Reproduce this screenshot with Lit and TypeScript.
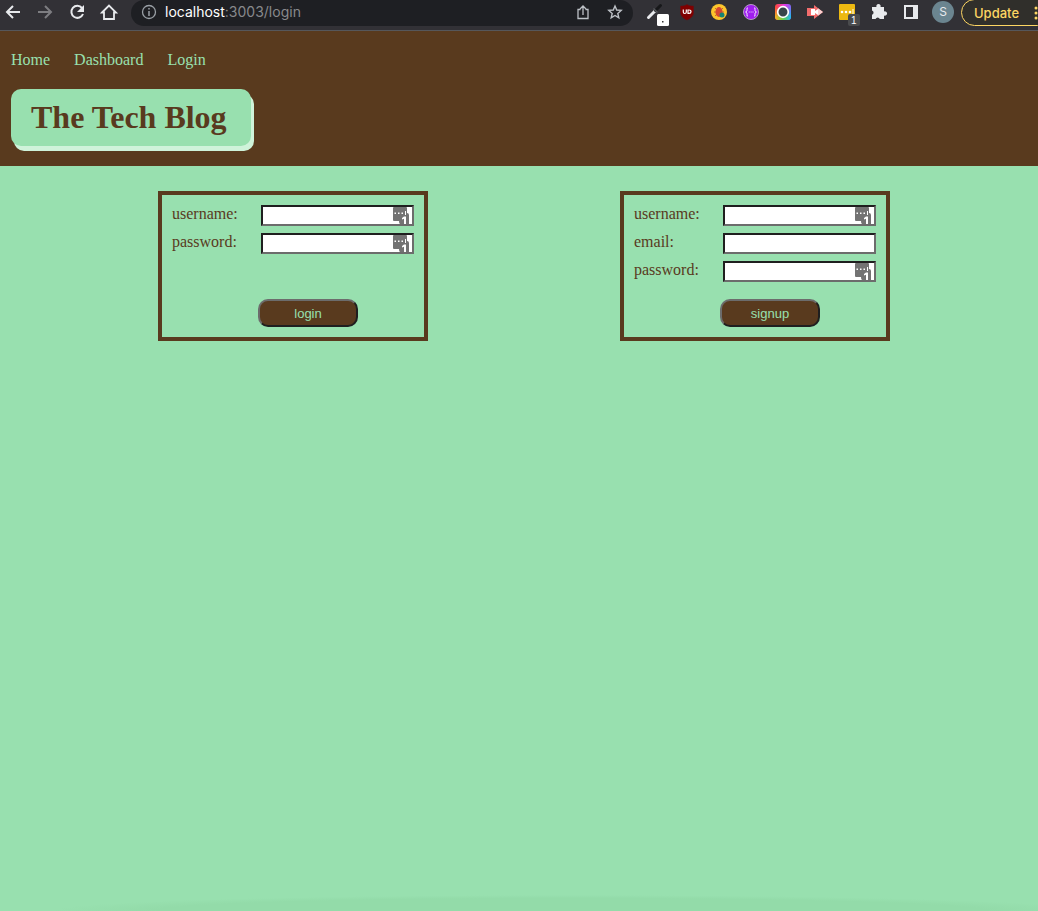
import { LitElement, html, svg, css, nothing } from "lit";
import { customElement, property } from "lit/decorators.js";

interface Field {
  name: string;
  type: string;
  filler: boolean;
}

@customElement("browser-bar")
export class BrowserBar extends LitElement {
  static styles = css`
    :host {
      display: block;
      color: #e8eaed;
      font-family: Inter, "Liberation Sans", sans-serif;
      background: #323136;
      border-bottom: 1px solid #56575b;
    }
    .bar {
      display: flex;
      align-items: flex-start;
      height: 30px;
      overflow: hidden;
    }
    button {
      display: block;
      flex: none;
      margin: 0;
      padding: 0;
      border: 0;
      color: inherit;
      background: none;
      font-family: inherit;
    }
    svg {
      display: block;
    }
    .tools {
      display: flex;
      gap: 8px;
      padding-left: 1px;
    }
    .dim {
      color: #7d7d81;
    }
    .address {
      display: flex;
      flex: 1;
      min-width: 0;
      height: 26px;
      margin-left: 10px;
      padding: 0 6px;
      background: #1e1f23;
      border-radius: 13px;
    }
    .info {
      color: #9aa0a6;
    }
    .url {
      flex: 1;
      margin-left: 4px;
      color: #88898c;
      font-size: 14px;
      line-height: 24px;
      white-space: nowrap;
    }
    .host {
      color: #ffffff;
    }
    .actions {
      display: flex;
      gap: 8px;
      color: #bdc1c6;
    }
    .extensions {
      display: flex;
      gap: 8px;
      margin-left: 10px;
    }
    .avatar {
      width: 22px;
      height: 22px;
      margin: 1px 0 0 9px;
      border-radius: 50%;
      background: #6b8590;
      font-size: 12px;
      line-height: 22px;
      text-align: center;
    }
    .update {
      display: flex;
      align-items: center;
      justify-content: space-between;
      box-sizing: border-box;
      width: 90px;
      height: 27px;
      margin: -1px -13px 0 7px;
      padding: 0 12px;
      color: #fdd663;
      background: #302f2b;
      border: 1px solid #fdd663;
      border-radius: 14px;
      font-size: 13px;
      font-weight: 500;
    }
  `;

  private icon(shape: unknown) {
    return html`<svg width="24" height="27" viewBox="0 0 24 27" fill="none" stroke="currentColor" stroke-width="2" aria-hidden="true">${shape}</svg>`;
  }

  private extensions() {
    return [
      ["Color picker", svg`<path d="M5.500 17.500 12 11" stroke="#e8eaed" stroke-width="3" stroke-linecap="round"/><path d="M12.500 10.500 17.500 5.500" stroke="#17181a" stroke-width="3" stroke-linecap="round"/><path d="M10.500 8.500l4 4" stroke="#55575b" stroke-width="1.500"/><rect x="14" y="14" width="12" height="12" rx="1.500" fill="#fff" stroke="none"/><rect x="19" y="21" width="1.500" height="1.500" fill="#333" stroke="none"/>`],
      ["Blocker", svg`<path d="M12 4.500c2 1.500 4 1.500 6.500 1.500v6.500c0 3.500-3 6-6.500 7.500-3.500-1.500-6.500-4-6.500-7.500V6c2.500 0 4.500 0 6.500-1.500z" fill="#800000" stroke="#6b0c12" stroke-width=".5"/><path d="M8.300 9.500v2.500q0 1.500 1.500 1.500t1.500-1.500v-2.500M13 10h1q2 0 2 1.700t-2 1.700H13z" stroke="#fff" stroke-width="1.200"/>`],
      ["Bug finder", svg`<circle cx="12" cy="12" r="8" fill="#fcc52c" stroke="none"/><path d="M8 8l2 2m6-2-2 2M7 12h3m4 0h3M8 16l2-2" stroke="#c36a2d" stroke-width="1"/><ellipse cx="12" cy="12" rx="3.500" ry="5" fill="#d54732" stroke="none"/><circle cx="15" cy="15" r="2.500" fill="#168474" stroke="none"/>`],
      ["Code viewer", svg`<circle cx="12" cy="12" r="7.500" fill="#a01df0" stroke="#b69bc7" stroke-width="1"/><path d="M9 8H8v3l-1.500 1L8 13v3h1M15 8h1v3l1.500 1-1.500 1v3h-1M9.700 12h1M11.600 12h1M13.500 12h1" stroke="#ead8fa" stroke-width="1"/>`],
      ["Color ring", svg`<defs><linearGradient id="upper" x1="0" x2="1"><stop stop-color="#ff4a30"/><stop offset=".6" stop-color="#e438e8"/><stop offset="1" stop-color="#7a6af6"/></linearGradient><linearGradient id="lower" x1="0" x2="1"><stop stop-color="#ffb020"/><stop offset=".5" stop-color="#62d04a"/><stop offset="1" stop-color="#20b8f6"/></linearGradient><linearGradient id="fade" x1="0" x2="0" y1="0" y2="1"><stop offset=".2" stop-color="#000"/><stop offset=".8" stop-color="#fff"/></linearGradient><mask id="low"><rect x="4" y="4" width="16" height="16" fill="url(#fade)" stroke="none"/></mask></defs><rect x="4" y="4" width="16" height="16" rx="3" fill="url(#upper)" stroke="none"/><rect x="4" y="4" width="16" height="16" rx="3" fill="url(#lower)" stroke="none" mask="url(#low)"/><circle cx="12" cy="12" r="5.300" fill="#38444b" stroke="#fff" stroke-width="1.700"/>`],
      ["Recorder", svg`<path d="M4 8h7V5l9 7-9 7v-3H4z" fill="#f26c6c" stroke="none"/><path d="M8 9h4v2l3-2v6l-3-2v2H8z" fill="#fff" stroke="none"/><path d="M15 8.300 20 12l-5 3.700z" fill="#fbd3d3" stroke="none"/>`],
      ["Password manager, 1 item", svg`<rect x="4" y="4" width="16" height="16" rx="1" fill="#edb911" stroke="none"/><g fill="#fff" stroke="none"><circle cx="7" cy="12" r="1.300"/><circle cx="11" cy="12" r="1.300"/><circle cx="15" cy="12" r="1.300"/><path d="M17.500 9h1v5h-1z"/></g><rect x="13" y="14" width="12" height="12" rx="2" fill="#4a4b4d" stroke="none"/><text x="16" y="24" fill="#fff" stroke="none" font-family="Liberation Sans, sans-serif" font-size="10">1</text>`],
      ["Extensions", svg`<path d="M5 7h4.500a2.200 2.200 0 1 1 4 0H17v4.500a2.200 2.200 0 1 1 0 4V19h-4.200a2.200 2.200 0 0 0-4.200 0H5v-4.200a2.200 2.200 0 0 0 0-4.200z" fill="currentColor" stroke="none"/>`],
      ["Side panel", svg`<path d="M5 5h14v14H5zM7 7v10h7V7z" fill="currentColor" fill-rule="evenodd" stroke="none"/>`],
    ] as const;
  }

  render() {
    return html`
      <div class="bar">
        <div class="tools">
          <button aria-label="Back">${this.icon(svg`<path d="M19 12H6m6-6-6 6 6 6"/>`)}</button>
          <button class="dim" aria-label="Forward">${this.icon(svg`<path d="M5 12h13m-6-6 6 6-6 6"/>`)}</button>
          <button aria-label="Reload">${this.icon(svg`<path d="M17 8a6 6 0 1 0 1 6"/><path d="M19 5v7h-7z" fill="currentColor" stroke="none"/>`)}</button>
          <button aria-label="Home page">${this.icon(svg`<path d="M5 12.500l7-7 7 7h-2V19H7v-6.500z" stroke-width="1.800"/>`)}</button>
        </div>
        <div class="address">
          <button class="info" aria-label="Site information">${this.icon(svg`<circle cx="12" cy="12" r="6.500" stroke-width="1.300"/><path d="M12 11v5M12 8v1.500" stroke-width="1.500"/>`)}</button>
          <div class="url"><span class="host">localhost</span>:3003/login</div>
          <div class="actions">
            <button aria-label="Share">${this.icon(svg`<path d="M9.500 9.500H7V18.500h10V9.500h-2.500M12 15V6m-3 3 3-3 3 3" stroke-width="1.300"/>`)}</button>
            <button aria-label="Bookmark">${this.icon(svg`<path d="m12 6 1.700 4 4.500.4-3.400 3 1 4.400-3.800-2.300-3.800 2.300 1-4.400-3.400-3 4.500-.4z" stroke-width="1.400"/>`)}</button>
          </div>
        </div>
        <div class="extensions">
          ${this.extensions().map(([name, shape]) => html`<button aria-label=${name}><svg width="24" height="27" viewBox="0 0 24 27" overflow="visible" fill="none" stroke="currentColor" stroke-width="2" aria-hidden="true">${shape}</svg></button>`)}
        </div>
        <button class="avatar" aria-label="Profile S">S</button>
        <button class="update">Update
          <svg width="4" height="14" viewBox="0 0 4 14" fill="currentColor" aria-hidden="true"><circle cx="2" cy="2" r="1.500"/><circle cx="2" cy="7" r="1.500"/><circle cx="2" cy="12" r="1.500"/></svg>
        </button>
      </div>
    `;
  }
}

@customElement("account-form")
export class AccountForm extends LitElement {
  @property() action = "";
  @property({ attribute: false }) fields: Field[] = [];

  static styles = css`
    :host {
      display: block;
    }
    form {
      display: flex;
      flex-direction: column;
      box-sizing: border-box;
      width: 270px;
      min-height: 150px;
      padding: 10px;
      border: 4px solid #593a1e;
      color: #593a1e;
      font-size: 16px;
      line-height: 18px;
    }
    .row {
      display: flex;
      align-items: flex-start;
      justify-content: space-between;
      margin-bottom: 7px;
    }
    .entry {
      display: grid;
    }
    input,
    .filler {
      grid-area: 1 / 1;
    }
    input {
      box-sizing: border-box;
      width: 153px;
      height: 21px;
      margin: 0;
      padding: 1px 2px;
      border: 2px solid;
      border-color: #1f1f1f #6c6c6c #6c6c6c #1f1f1f;
      border-radius: 0;
      background: #ffffff;
      font: 13px "Liberation Sans", sans-serif;
    }
    .filler {
      justify-self: end;
      align-self: center;
      margin-right: 5px;
      pointer-events: none;
    }
    button {
      width: 100px;
      height: 28px;
      margin: auto 0 0 86px;
      padding: 0;
      color: #98e0af;
      background: #593a1e;
      border: 2px solid;
      border-color: #6c6c6c #1f1f1f #1f1f1f #6c6c6c;
      border-radius: 10px;
      font: 13px "Liberation Sans", sans-serif;
    }
  `;

  render() {
    return html`
      <form @submit=${(e: Event) => e.preventDefault()}>
        ${this.fields.map(
          (f) => html`
            <div class="row">
              <label for=${f.name}>${f.name}:</label>
              <div class="entry">
                <input id=${f.name} name=${f.name} type=${f.type} />
                ${f.filler
                  ? html`<svg class="filler" width="16" height="17" viewBox="0 0 16 17" aria-hidden="true">
                      <path d="M1 0h12q1 0 1 1v5q2 0 2 2v9H7q-1 0-1-3H1q-1 0-1-1V1q0-1 1-1z" fill="#737373" />
                      <path d="M1.500 5.500H3V7H1.500zM5 5.500h1.500V7H5zM8.500 5.500H10V7H8.500zM12 4h1v4h-1z" fill="#fff" />
                      <path d="M9 11l2-1.500h2V17h-2v-5.300L9 12.500z" fill="#fff" />
                    </svg>`
                  : nothing}
              </div>
            </div>
          `,
        )}
        <button type="submit">${this.action}</button>
      </form>
    `;
  }
}

@customElement("app-root")
export class AppRoot extends LitElement {
  static styles = css`
    :host {
      display: flex;
      flex-direction: column;
      min-height: 100vh;
      background: #98e0af;
      font-family: "Liberation Serif", "Times New Roman", serif;
    }
    header {
      padding: 20px 11px;
      background: #593a1e;
    }
    nav {
      display: flex;
      gap: 24px;
      font-size: 16px;
      line-height: 18px;
    }
    nav a {
      color: #98e0af;
      text-decoration: none;
    }
    h1 {
      width: fit-content;
      margin: 20px 0 0;
      padding: 10px 24px 10px 20px;
      color: #593a1e;
      background: #98e0af;
      border-radius: 10px;
      box-shadow: 3px 5px #cff3da;
      font-size: 32px;
      line-height: 37px;
    }
    main {
      display: flex;
      flex: 1;
      flex-wrap: wrap;
      align-items: flex-start;
      justify-content: space-around;
      padding: 25px 52px 25px 62px;
    }
    footer {
      height: 16px;
      background: radial-gradient(ellipse 50% 100% at 55% 100%, #93dba9 80%, #98e0af);
    }
  `;

  private loginFields: Field[] = [
    { name: "username", type: "text", filler: true },
    { name: "password", type: "password", filler: true },
  ];

  private signupFields: Field[] = [
    { name: "username", type: "text", filler: true },
    { name: "email", type: "email", filler: false },
    { name: "password", type: "password", filler: true },
  ];

  render() {
    return html`
      <browser-bar></browser-bar>
      <header>
        <nav>
          <a href="#home">Home</a>
          <a href="#dashboard">Dashboard</a>
          <a href="#login">Login</a>
        </nav>
        <h1>The Tech Blog</h1>
      </header>
      <main>
        <account-form action="login" .fields=${this.loginFields}></account-form>
        <account-form action="signup" .fields=${this.signupFields}></account-form>
      </main>
      <footer></footer>
    `;
  }
}
